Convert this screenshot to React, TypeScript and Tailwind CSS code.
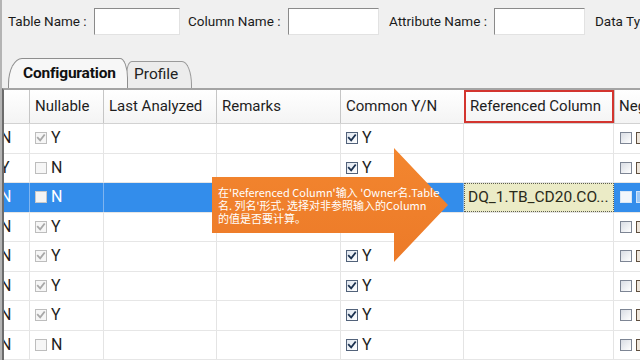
import React from "react";

type BoxKind = "disabled" | "active" | "neg" | "brown";

function Check({ color }: { color: string }) {
  return (
    <svg viewBox="0 0 12 12" className="absolute inset-0 w-full h-full">
      <path d="M2.2 5.8 L5 8.8 L9.8 2.6" fill="none" stroke={color} strokeWidth="2.2" strokeLinecap="square" />
    </svg>
  );
}

function Box({ kind, checked, selected }: { kind: BoxKind; checked?: boolean; selected?: boolean }) {
  if (kind === "disabled") {
    return (
      <span
        className={
          "relative inline-block w-[12px] h-[12px] shrink-0 border " +
          (selected ? "border-[#c8c8c8] bg-[#f4f4f4]" : "border-[#bdbdbd] bg-[#f6f6f6]")
        }
      >
        {checked ? <Check color="#a8a8a8" /> : null}
      </span>
    );
  }
  if (kind === "active") {
    return (
      <span className="relative inline-block w-[12px] h-[12px] shrink-0 border border-[#52627a] bg-gradient-to-br from-[#dfe6ef] to-[#ffffff]">
        {checked ? <Check color="#1b3150" /> : null}
      </span>
    );
  }
  if (kind === "brown") {
    return (
      <span
        className={
          "inline-block w-[12px] h-[12px] shrink-0 border " +
          (selected ? "border-[#cfe4fb] bg-[#9cc8f6]" : "border-[#5e4e3e] bg-[#eee6dc]")
        }
      />
    );
  }
  return (
    <span
      className={
        "inline-block w-[12px] h-[12px] shrink-0 border " +
        (selected ? "border-[#d8e6f5] bg-[#f2f6fb]" : "border-[#7d8594] bg-gradient-to-br from-[#d9dde4] to-[#ffffff]")
      }
    />
  );
}

type Row = { lead: string; nullable: boolean; common: boolean; ref?: string };

const rows: Row[] = [
  { lead: "N", nullable: true, common: true },
  { lead: "Y", nullable: false, common: true },
  { lead: "N", nullable: false, common: true, ref: "DQ_1.TB_CD20.CO..." },
  { lead: "N", nullable: true, common: true },
  { lead: "N", nullable: true, common: true },
  { lead: "N", nullable: true, common: true },
  { lead: "N", nullable: true, common: true },
  { lead: "N", nullable: false, common: true },
];

const cols = ["w-[26px]", "w-[74px]", "w-[113px]", "w-[124px]", "w-[123px]", "w-[150px]", "w-[60px]"];

function Field({ label, labelW, inputW }: { label: string; labelW: string; inputW: string }) {
  return (
    <div className="flex items-center">
      <span className={labelW + " text-[13.5px] text-[#1a1a1a] whitespace-nowrap"}>{label}</span>
      <span className={inputW + " h-[27px] bg-white border border-t-[#8a8a8a] border-l-[#8a8a8a] border-r-[#e2e2e2] border-b-[#e2e2e2]"} />
    </div>
  );
}

export default function App() {
  return (
    <div className="relative w-[640px] h-[360px] overflow-hidden bg-[#f0f0f0] border-l-2 border-[#b4b4b4] font-[Roboto,'Noto_Sans',sans-serif]">
      {/* filter bar */}
      <div className="flex items-center h-[27px] mt-[8px] pl-[6px] gap-0">
        <Field label="Table Name :" labelW="w-[86px]" inputW="w-[86px]" />
        <div className="ml-[8px]">
          <Field label="Column Name :" labelW="w-[100px]" inputW="w-[91px]" />
        </div>
        <div className="ml-[10px]">
          <Field label="Attribute Name :" labelW="w-[105px]" inputW="w-[91px]" />
        </div>
        <span className="ml-[10px] text-[13.5px] text-[#1a1a1a] whitespace-nowrap">Data Type :</span>
      </div>

      {/* tabs */}
      <div className="flex items-end h-[30px] mt-[23px] pl-[6px]">
        <div className="relative z-10 flex items-center w-[120px] h-[30px] pl-[14px] border border-b-0 border-[#8e8e8e] bg-[#f7f7f7] rounded-tl-[14px_26px] rounded-tr-[8px_20px] text-[15.5px] font-bold text-[#111] tracking-[-0.2px]">
          Configuration
        </div>
        <div className="flex items-center w-[66px] h-[27px] -ml-[2px] pl-[7px] border border-b-0 border-[#9a9a9a] bg-[#ececec] rounded-tl-[6px_14px] rounded-tr-[10px_24px] text-[15.5px] text-[#222]">
          Profile
        </div>
      </div>

      {/* table */}
      <div className="border-t-2 border-[#a4a4a4] border-l-2 border-l-[#6c6c6c] bg-white">
        <div className="flex h-[34px] bg-gradient-to-b from-[#ffffff] to-[#f4f4f4] border-b border-[#d2d2d2] text-[15px] text-[#1e1e1e]">
          <div className={cols[0] + " shrink-0 border-r border-[#c6c6c6]"} />
          <div className={cols[1] + " shrink-0 border-r border-[#c6c6c6] flex items-center pl-[5px]"}>Nullable</div>
          <div className={cols[2] + " shrink-0 border-r border-[#c6c6c6] flex items-center pl-[5px]"}>Last Analyzed</div>
          <div className={cols[3] + " shrink-0 border-r border-[#c6c6c6] flex items-center pl-[5px]"}>Remarks</div>
          <div className={cols[4] + " shrink-0 flex items-center pl-[5px]"}>Common Y/N</div>
          <div className={cols[5] + " shrink-0 border-2 border-[#d3352f] flex items-center pl-[4px] whitespace-nowrap"}>Referenced Column</div>
          <div className={cols[6] + " shrink-0 flex items-center pl-[4px] border-l border-[#c6c6c6]"}>Neg</div>
        </div>

        {rows.map((r, i) => {
          const sel = !!r.ref;
          const line = sel ? "border-[#7fb4ef]" : "border-[#e4e4e4]";
          const bg = sel ? "bg-[#338deb] text-white" : "bg-white text-[#1e1e1e]";
          return (
            <div key={i} className={"flex h-[29.5px] border-b border-[#e6e6e6] text-[16px] " + bg}>
              <div className={cols[0] + " shrink-0 overflow-hidden border-r flex items-center " + line}>
                <span className="-ml-[4px]">{r.lead}</span>
              </div>
              <div className={cols[1] + " shrink-0 border-r flex items-center gap-[4px] pl-[5px] " + line}>
                <Box kind="disabled" checked={r.nullable} selected={sel} />
                <span>{r.nullable ? "Y" : "N"}</span>
              </div>
              <div className={cols[2] + " shrink-0 border-r " + line} />
              <div className={cols[3] + " shrink-0 border-r " + line} />
              <div className={cols[4] + " shrink-0 border-r flex items-center gap-[4px] pl-[5px] " + line}>
                <Box kind="active" checked={r.common} />
                <span>{r.common ? "Y" : "N"}</span>
              </div>
              {sel ? (
                <div className={cols[5] + " shrink-0 flex items-center pl-[3px] bg-[#ebebc6] border border-dotted border-[#5e5e50] text-[#2a2a1a] text-[15.5px] whitespace-nowrap"}>
                  {r.ref}
                </div>
              ) : (
                <div className={cols[5] + " shrink-0 border-r " + line} />
              )}
              <div className={cols[6] + " shrink-0 flex items-center gap-[4px] pl-[6px]"}>
                <Box kind="neg" selected={sel} />
                <Box kind="brown" selected={sel} />
              </div>
            </div>
          );
        })}
      </div>

      {/* callout arrow */}
      <svg className="absolute left-0 top-0 pointer-events-none" width="640" height="360" viewBox="0 0 640 360">
        <defs>
          <linearGradient id="og" x1="0" y1="0" x2="0" y2="1">
            <stop offset="0" stopColor="#f3862f" />
            <stop offset="1" stopColor="#ec7a28" />
          </linearGradient>
        </defs>
        <polygon points="210,177 392,177 392,148 446,205 392,262 392,233 210,233" fill="url(#og)" />
      </svg>
      <div className="absolute left-[216px] top-[186px] w-[210px] text-[11px] leading-[13px] text-white font-['Noto_Sans_CJK_SC','Noto_Sans',sans-serif] whitespace-nowrap">
        <div>在'Referenced Column'输入 'Owner名.Table</div>
        <div>名. 列名'形式. 选择对非参照输入的Column</div>
        <div>的值是否要计算。</div>
      </div>
    </div>
  );
}
